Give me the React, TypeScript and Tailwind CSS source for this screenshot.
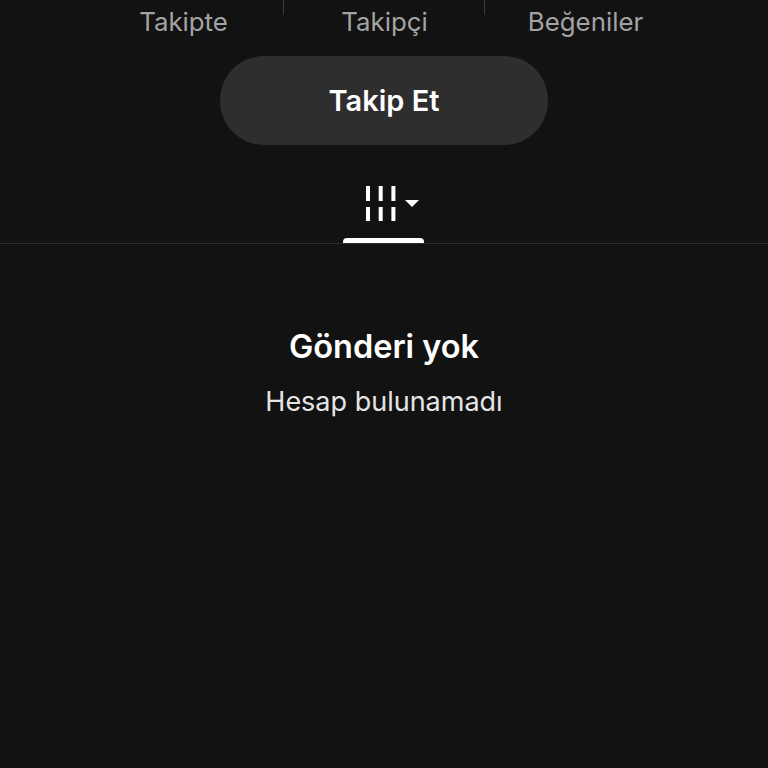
import React from 'react';

const stats = ['Takipte', 'Takipçi', 'Beğeniler'];

function FilterIcon() {
  return (
    <svg width="32" height="37" viewBox="0 0 32 37" fill="none" stroke="#fff" strokeWidth="4">
      <path d="M3 2v15M15.7 2v15M28.4 2v15M3 23v14M15.7 23v14M28.4 23v14" />
    </svg>
  );
}

export default function App() {
  return (
    <div
      className="w-[768px] h-[768px] overflow-hidden bg-[#121212] flex flex-col items-center"
      style={{ fontFamily: 'Inter, "Liberation Sans", sans-serif' }}
    >
      <div className="w-[603px] ml-[1px] h-[40px] grid grid-cols-3 shrink-0">
        {stats.map((label, i) => (
          <div key={label} className="relative flex justify-center pt-[6px]">
            <span className="text-[25.8px] leading-[32px] text-[#a3a3a3]">{label}</span>
            {i < 2 && <div className="absolute right-0 top-0 h-[15px] w-px bg-[#3a3a3a]" />}
          </div>
        ))}
      </div>
      <button className="mt-[16px] w-[328px] h-[89px] rounded-[44px] bg-[#2e2e2e] text-white text-[29px] font-semibold shrink-0">
        Takip Et
      </button>
      <div className="w-full h-[99px] border-b border-[#2e2e2e] flex flex-col items-center shrink-0">
        <div className="mt-[39px] h-[55px] w-[81px] flex items-start pl-[21px]">
          <FilterIcon />
          <div className="ml-[8px] mt-[16px] w-0 h-0 border-l-[7px] border-r-[7px] border-t-[7px] border-l-transparent border-r-transparent border-t-white" />
        </div>
        <div className="w-[81px] h-[5px] -translate-x-[1px] rounded-t-[4px] bg-white" />
      </div>
      <div className="mt-[81px] text-[32.5px] leading-[44px] font-semibold text-white">Gönderi yok</div>
      <div className="mt-[17px] text-[27px] leading-[32px] text-[#e5e5e5]">Hesap bulunamadı</div>
    </div>
  );
}
